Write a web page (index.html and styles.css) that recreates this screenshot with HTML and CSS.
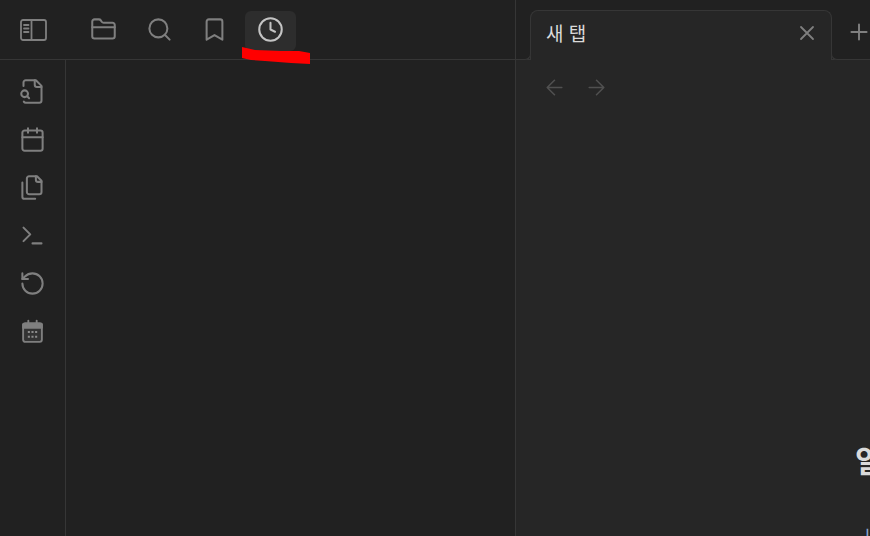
FILE: index.html
```html
<!DOCTYPE html>
<html lang="ko">
<head>
<meta charset="UTF-8">
<meta name="viewport" content="width=device-width, initial-scale=1.0">
<title>새 탭</title>
<link rel="stylesheet" href="styles.css">
</head>
<body>
<div class="app">
    <div class="left-pane">
        <div class="top-bar">
            <div class="toggle-slot">
                <svg class="icon toggle-icon" viewBox="0 0 27 22">
                    <rect x="1" y="1" width="25" height="20" rx="2"/>
                    <path d="M11.5 1v20M4 6h4.5M4 9.5h4.5M4 13h4.5"/>
                </svg>
            </div>
            <div class="nav-tabs">
                <div class="nav-tab">
                    <svg class="icon" viewBox="0 0 24 24">
                        <path d="M20 20a2 2 0 0 0 2-2V8a2 2 0 0 0-2-2h-7.9a2 2 0 0 1-1.69-.9L9.6 3.9A2 2 0 0 0 7.93 3H4a2 2 0 0 0-2 2v13a2 2 0 0 0 2 2Z"/>
                        <path d="M2 10h20"/>
                    </svg>
                </div>
                <div class="nav-tab">
                    <svg class="icon" viewBox="0 0 24 24">
                        <circle cx="11" cy="11" r="8"/>
                        <path d="m21 21-4.3-4.3"/>
                    </svg>
                </div>
                <div class="nav-tab">
                    <svg class="icon" viewBox="0 0 24 24">
                        <path d="m19 21-7-4-7 4V5a2 2 0 0 1 2-2h10a2 2 0 0 1 2 2v16z"/>
                    </svg>
                </div>
                <div class="nav-tab active">
                    <svg class="icon" viewBox="0 0 24 24">
                        <circle cx="12" cy="12" r="10"/>
                        <path d="M12 6v6l4 2"/>
                    </svg>
                </div>
            </div>
        </div>
        <div class="left-body">
            <div class="ribbon">
                <div class="ribbon-item">
                    <svg class="icon" viewBox="0 0 24 24">
                        <path d="M14 2v4a2 2 0 0 0 2 2h4"/>
                        <path d="M4.268 21a2 2 0 0 0 1.727 1H18a2 2 0 0 0 2-2V7l-5-5H6a2 2 0 0 0-2 2v3"/>
                        <path d="m9 18-1.5-1.5"/>
                        <circle cx="5" cy="14" r="3"/>
                    </svg>
                </div>
                <div class="ribbon-item">
                    <svg class="icon" viewBox="0 0 24 24">
                        <path d="M8 2v4M16 2v4"/>
                        <rect x="3" y="4" width="18" height="18" rx="2"/>
                        <path d="M3 10h18"/>
                    </svg>
                </div>
                <div class="ribbon-item">
                    <svg class="icon" viewBox="0 0 24 24">
                        <path d="M20 7h-3a2 2 0 0 1-2-2V2"/>
                        <path d="M9 18a2 2 0 0 1-2-2V4a2 2 0 0 1 2-2h7l4 4v10a2 2 0 0 1-2 2Z"/>
                        <path d="M3 7.6v12.8A1.6 1.6 0 0 0 4.6 22h9.8"/>
                    </svg>
                </div>
                <div class="ribbon-item">
                    <svg class="icon" viewBox="0 0 24 24">
                        <path d="m4 17 6-6-6-6"/>
                        <path d="M12 19h8"/>
                    </svg>
                </div>
                <div class="ribbon-item">
                    <svg class="icon" viewBox="0 0 24 24">
                        <path d="M3 12a9 9 0 1 0 9-9 9.75 9.75 0 0 0-6.74 2.74L3 8"/>
                        <path d="M3 3v5h5"/>
                    </svg>
                </div>
                <div class="ribbon-item">
                    <svg class="icon calendar-days" viewBox="0 0 24 24">
                        <path d="M8 1.5v3M16 1.5v3"/>
                        <rect class="calendar-body" x="3" y="4" width="18" height="18" rx="2"/>
                        <path class="filled" d="M3 5h18v3.5H3z"/>
                        <path class="dots" d="M7.5 12.5h2M11 12.5h2M14.5 12.5h2M7.5 17h2M11 17h2M14.5 17h2"/>
                    </svg>
                </div>
            </div>
            <div class="side-panel"></div>
        </div>
    </div>
    <div class="main-pane">
        <div class="tab-bar">
            <div class="tab">
                <span class="tab-title">새 탭</span>
                <svg class="icon tab-close" viewBox="0 0 24 24">
                    <path d="M18 6 6 18M6 6l12 12"/>
                </svg>
            </div>
            <svg class="icon new-tab" viewBox="0 0 24 24">
                <path d="M5 12h14M12 5v14"/>
            </svg>
        </div>
        <div class="view-nav">
            <svg class="icon arrow" viewBox="0 0 24 24">
                <path d="M19 12H5M12 19l-7-7 7-7"/>
            </svg>
            <svg class="icon arrow" viewBox="0 0 24 24">
                <path d="M5 12h14M12 5l7 7-7 7"/>
            </svg>
        </div>
        <div class="empty-state">
            <div class="empty-title">일치하는 파일 없음</div>
            <a class="empty-link">내 파일 만들기</a>
        </div>
    </div>
</div>
<svg class="scribble" viewBox="0 0 70 18">
    <path d="M1 1 L14 4 L40 5 L58 5 L69 7 L69 18 L50 17 L24 15 L10 14 L1 12 Z"/>
</svg>
</body>
</html>
```

FILE: styles.css
```css
body {
    margin: 0;
    width: 870px;
    height: 536px;
    overflow: hidden;
    background-color: #212121;
    font-family: "Noto Sans CJK KR", "Noto Sans", sans-serif;
}

.app {
    display: flex;
    height: 536px;
}

.icon {
    fill: none;
    stroke: #7f7f7f;
    stroke-width: 1.8;
    stroke-linecap: round;
    stroke-linejoin: round;
    width: 27px;
    height: 27px;
    flex: none;
}

/* left side */
.left-pane {
    width: 515px;
    flex: none;
    display: flex;
    flex-direction: column;
    border-right: 1px solid #363636;
}

.top-bar {
    height: 59px;
    flex: none;
    display: flex;
    border-bottom: 1px solid #363636;
}

.toggle-slot {
    width: 66px;
    display: flex;
    justify-content: center;
    padding-top: 19px;
    box-sizing: border-box;
}

.toggle-icon {
    height: 22px;
}

.nav-tabs {
    display: flex;
    gap: 4.67px;
    margin-left: 12px;
    padding-top: 11px;
}

.nav-tab {
    width: 51px;
    height: 40px;
    border-radius: 6px;
    display: flex;
    align-items: center;
    justify-content: center;
    padding-bottom: 4px;
    box-sizing: border-box;
}

.nav-tab.active {
    background-color: #2d2d2d;
}

.nav-tab.active .icon {
    stroke: #c4c4c4;
}

.left-body {
    flex: 1;
    display: flex;
}

.ribbon {
    width: 65px;
    border-right: 1px solid #363636;
    padding-top: 7px;
}

.ribbon-item {
    height: 48px;
    display: flex;
    align-items: center;
    justify-content: center;
}

.calendar-days {
    width: 25px;
    height: 25px;
}

.calendar-body {
    fill: #333333;
}

.filled {
    fill: #7f7f7f;
}

.dots {
    stroke: #8c8c8c;
    stroke-width: 2;
    stroke-linecap: butt;
}

.side-panel {
    flex: 1;
}

/* main side */
.main-pane {
    flex: 1;
    min-width: 0;
    background-color: #262626;
    overflow: hidden;
}

.tab-bar {
    height: 49px;
    background-color: #212121;
    border-bottom: 1px solid #363636;
    display: flex;
    padding: 10px 0 0 14px;
}

.tab {
    width: 302px;
    height: 50px;
    box-sizing: border-box;
    background-color: #262626;
    border: 1px solid #363636;
    border-bottom: none;
    border-radius: 8px 8px 0 0;
    display: flex;
    justify-content: space-between;
    padding: 8px 12px 0 15px;
    position: relative;
    flex: none;
}

.tab::before,
.tab::after {
    content: "";
    position: absolute;
    bottom: 0;
    width: 6px;
    height: 6px;
    background-color: #212121;
    border-bottom: 1px solid #363636;
}

.tab::before {
    left: -7px;
    border-right: 1px solid #363636;
    border-bottom-right-radius: 6px;
}

.tab::after {
    right: -7px;
    border-left: 1px solid #363636;
    border-bottom-left-radius: 6px;
}

.tab-title {
    color: #dadada;
    font-size: 19px;
    line-height: 28px;
}

.tab-close {
    width: 24px;
    height: 24px;
    margin-top: 2px;
}

.new-tab {
    margin: 9px 0 0 14px;
    width: 26px;
    height: 26px;
}

.view-nav {
    display: flex;
    gap: 17px;
    padding: 15px 0 0 26px;
}

.arrow {
    width: 25px;
    height: 25px;
    stroke: #505050;
    stroke-width: 1.5;
}

.empty-state {
    margin-top: 339px;
    padding-left: 339px;
    white-space: nowrap;
}

.empty-title {
    color: #dadada;
    font-size: 30px;
    font-weight: 700;
    line-height: 40px;
}

.empty-link {
    display: block;
    margin-top: 41px;
    padding-left: 10px;
    color: #8aa8d0;
    font-size: 18px;
    line-height: 28px;
}

.scribble {
    position: absolute;
    left: 241px;
    top: 46px;
    width: 70px;
    height: 18px;
    fill: #ff0000;
}
```
